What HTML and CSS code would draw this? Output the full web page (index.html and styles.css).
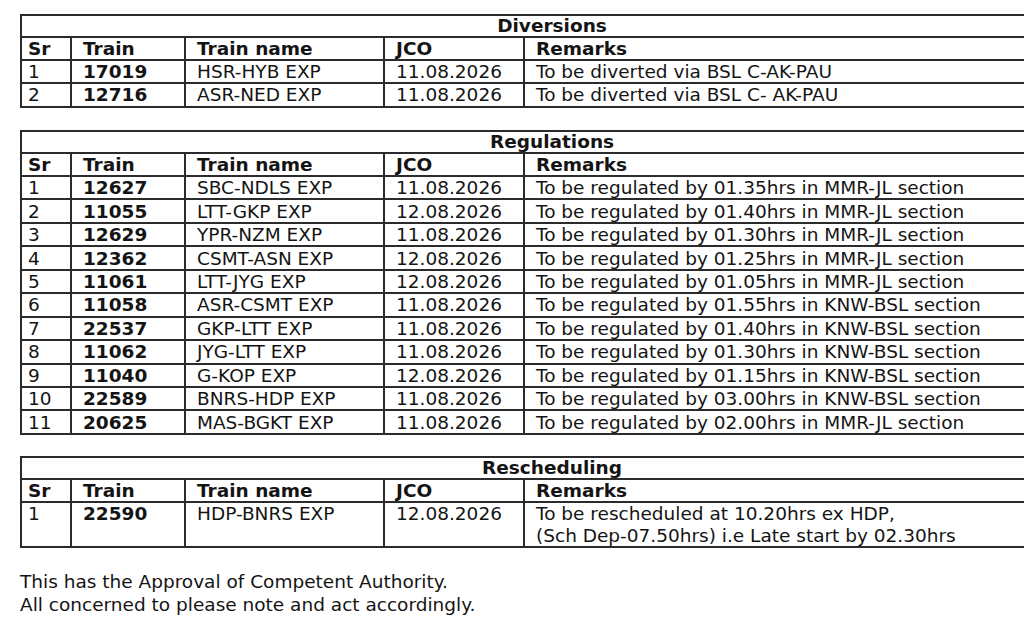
FILE: index.html
```html
<!DOCTYPE html>
<html>
<head>
<meta charset="utf-8">
<link rel="stylesheet" href="styles.css">
</head>
<body>
<div class="page">
  <table class="sheet">
    <colgroup><col class="c-sr"><col class="c-tr"><col class="c-nm"><col class="c-jco"><col class="c-rm"></colgroup>
    <tr class="title"><td colspan="5">Diversions</td></tr>
    <tr class="head"><td class="sr">Sr</td><td>Train</td><td>Train name</td><td>JCO</td><td>Remarks</td></tr>
    <tr><td class="sr">1</td><td class="num">17019</td><td>HSR-HYB EXP</td><td>11.08.2026</td><td>To be diverted via BSL C-AK-PAU</td></tr>
    <tr><td class="sr">2</td><td class="num">12716</td><td>ASR-NED EXP</td><td>11.08.2026</td><td>To be diverted via BSL C- AK-PAU</td></tr>
  </table>

  <table class="sheet reg">
    <colgroup><col class="c-sr"><col class="c-tr"><col class="c-nm"><col class="c-jco"><col class="c-rm"></colgroup>
    <tr class="title"><td colspan="5">Regulations</td></tr>
    <tr class="head"><td class="sr">Sr</td><td>Train</td><td>Train name</td><td>JCO</td><td>Remarks</td></tr>
    <tr><td class="sr">1</td><td class="num">12627</td><td>SBC-NDLS EXP</td><td>11.08.2026</td><td>To be regulated by 01.35hrs in MMR-JL section</td></tr>
    <tr><td class="sr">2</td><td class="num">11055</td><td>LTT-GKP EXP</td><td>12.08.2026</td><td>To be regulated by 01.40hrs in MMR-JL section</td></tr>
    <tr><td class="sr">3</td><td class="num">12629</td><td>YPR-NZM EXP</td><td>11.08.2026</td><td>To be regulated by 01.30hrs in MMR-JL section</td></tr>
    <tr><td class="sr">4</td><td class="num">12362</td><td>CSMT-ASN EXP</td><td>12.08.2026</td><td>To be regulated by 01.25hrs in MMR-JL section</td></tr>
    <tr><td class="sr">5</td><td class="num">11061</td><td>LTT-JYG EXP</td><td>12.08.2026</td><td>To be regulated by 01.05hrs in MMR-JL section</td></tr>
    <tr><td class="sr">6</td><td class="num">11058</td><td>ASR-CSMT EXP</td><td>11.08.2026</td><td>To be regulated by 01.55hrs in KNW-BSL section</td></tr>
    <tr><td class="sr">7</td><td class="num">22537</td><td>GKP-LTT EXP</td><td>11.08.2026</td><td>To be regulated by 01.40hrs in KNW-BSL section</td></tr>
    <tr><td class="sr">8</td><td class="num">11062</td><td>JYG-LTT EXP</td><td>11.08.2026</td><td>To be regulated by 01.30hrs in KNW-BSL section</td></tr>
    <tr><td class="sr">9</td><td class="num">11040</td><td>G-KOP EXP</td><td>12.08.2026</td><td>To be regulated by 01.15hrs in KNW-BSL section</td></tr>
    <tr><td class="sr">10</td><td class="num">22589</td><td>BNRS-HDP EXP</td><td>11.08.2026</td><td>To be regulated by 03.00hrs in KNW-BSL section</td></tr>
    <tr><td class="sr">11</td><td class="num">20625</td><td>MAS-BGKT EXP</td><td>11.08.2026</td><td>To be regulated by 02.00hrs in MMR-JL section</td></tr>
  </table>

  <table class="sheet">
    <colgroup><col class="c-sr"><col class="c-tr"><col class="c-nm"><col class="c-jco"><col class="c-rm"></colgroup>
    <tr class="title"><td colspan="5">Rescheduling</td></tr>
    <tr class="head"><td class="sr">Sr</td><td>Train</td><td>Train name</td><td>JCO</td><td>Remarks</td></tr>
    <tr class="tall"><td class="sr">1</td><td class="num">22590</td><td>HDP-BNRS EXP</td><td>12.08.2026</td><td>To be rescheduled at 10.20hrs ex HDP,<br>(Sch Dep-07.50hrs) i.e Late start by 02.30hrs</td></tr>
  </table>

  <div class="note">
    <p>This has the Approval of Competent Authority.</p>
    <p>All concerned to please note and act accordingly.</p>
  </div>
</div>
</body>
</html>
```

FILE: styles.css
```css
html, body {
  margin: 0;
  padding: 0;
  background: #ffffff;
  overflow: hidden;
}

.page {
  width: 1004px;
  height: 613px;
  overflow: hidden;
  padding: 14px 0 0 20px;
  font-family: "DejaVu Sans", Verdana, sans-serif;
  font-size: 18.5px;
  color: #141414;
}

.sheet {
  border-collapse: collapse;
  table-layout: fixed;
  width: 1062px;
  margin-bottom: 22px;
}

.sheet.reg {
  margin-bottom: 21px;
}

.c-sr { width: 50px; }
.c-tr { width: 114px; }
.c-nm { width: 199px; }
.c-jco { width: 140px; }
.c-rm { width: 559px; }

.sheet td {
  border: 2px solid #2b2b2b;
  height: 21.2px;
  line-height: 21px;
  padding: 0 0 0 11px;
  white-space: nowrap;
  vertical-align: middle;
}

.sheet.reg td {
  height: 21.45px;
}

.sheet td.sr {
  padding-left: 6px;
}

.sheet .title td,
.sheet.reg .title td {
  text-align: center;
  font-weight: bold;
  padding: 0;
  height: 20px;
  line-height: 20px;
  vertical-align: bottom;
}

.sheet .head td {
  font-weight: bold;
}

.sheet td.num {
  font-weight: bold;
}

.sheet .tall td {
  vertical-align: top;
  height: 42px;
  line-height: 21.5px;
  padding-top: 0;
}

.note {
  margin-top: 11px;
}

.note p {
  margin: 0;
  line-height: 23px;
}
```
